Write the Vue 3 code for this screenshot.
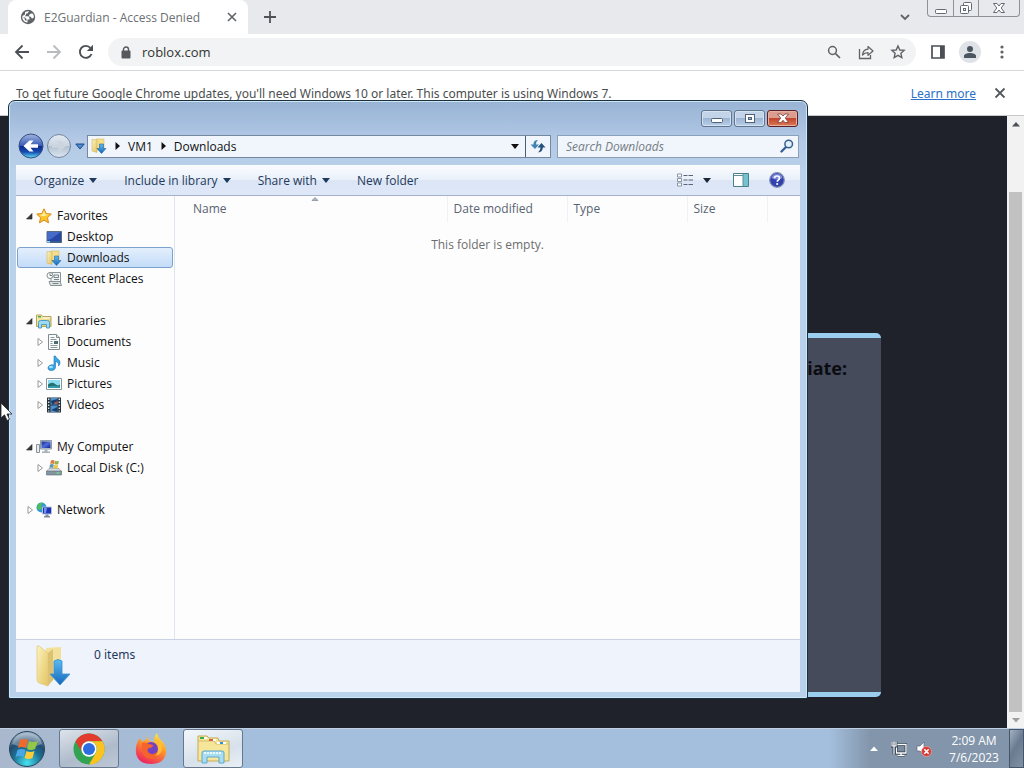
<template>
  <div class="desktop">
    <svg class="sprite" aria-hidden="true">
      <defs>
        <linearGradient id="folderFill" x1="0" y1="0" x2="1" y2="1">
          <stop offset="0" stop-color="#fdf3bd" />
          <stop offset="1" stop-color="#e2c462" />
        </linearGradient>
        <linearGradient id="blueArrow" x1="0" y1="0" x2="0" y2="1">
          <stop offset="0" stop-color="#5cbcf0" />
          <stop offset="1" stop-color="#1467bd" />
        </linearGradient>
        <linearGradient id="screenFill" x1="0" y1="0" x2="1" y2="1">
          <stop offset="0" stop-color="#16217e" />
          <stop offset="0.5" stop-color="#4d6ede" />
          <stop offset="1" stop-color="#101c86" />
        </linearGradient>
      </defs>
      <symbol id="icon-star" viewBox="0 0 16 16">
        <path
          d="M8 .8l2.2 4.7 5.1.6-3.8 3.5 1 5.2L8 12.2l-4.5 2.6 1-5.2L.7 6.1l5.1-.6z"
          fill="#fcc52c"
          stroke="#d88a1c"
        />
        <path d="M8 2.800l1.400 3.400 3.400.5-5.600 1.600-3.900-1.400 3.200-.6z" fill="#fff09a" />
      </symbol>
      <symbol id="icon-desktop" viewBox="0 0 16 16">
        <path d="M1 2.500h14.500v11H1z" fill="#2848a8" stroke="#5a6c86" />
        <path d="M1.500 3h13L5 10l-3.500 1z" fill="#5a86dc" opacity=".6" />
        <path d="M1 12h14.500v1.500H1z" fill="#365a8c" />
        <path d="M1 12h3v1.500H1z" fill="#8fe0f4" />
      </symbol>
      <symbol id="icon-downloads" viewBox="0 0 16 16">
        <path d="M5 1h8v11H5z" fill="#f5de8d" stroke="#dabd63" stroke-width=".6" />
        <path d="M1 1.500L6 2v12.500L1 13z" fill="url(#folderFill)" stroke="#cfab4b" stroke-width=".5" />
        <path
          d="M8.500 6h4v4.500H15l-4.500 5-4.500-5h2.500z"
          fill="url(#blueArrow)"
          stroke="#27639f"
          stroke-width=".6"
        />
      </symbol>
      <symbol id="icon-recent" viewBox="0 0 16 16">
        <path d="M5 1.500h9.500v11H5z" fill="#f1f4f5" stroke="#8d9799" />
        <path d="M3 10.500h11l1.500 4H4.500z" fill="#dfe5e5" stroke="#879193" />
        <path d="M8 4h4.500v2.500H8zM8 8.500h5M6.500 12.500h6" fill="none" stroke="#788588" />
        <circle cx="4" cy="4.500" r="3" fill="#fff" stroke="#7f8a8c" />
        <path d="M4 2.500v2h2" fill="none" stroke="#66777a" />
      </symbol>
      <symbol id="icon-libraries" viewBox="0 0 16 16">
        <path d="M.5 13.500V2h5l1 1.500H15v10z" fill="url(#folderFill)" stroke="#b5a45c" />
        <path d="M2 3h3v1.500H2z" fill="#45a758" />
        <path d="M7 4.500h7v1H7z" fill="#fff" />
        <path
          d="M2.500 15V9.500q0-2 2-2h7q2 0 2 2V15h-3v-3.500h-5V15z"
          fill="#9ddaf1"
          stroke="#4c9fc4"
        />
      </symbol>
      <symbol id="icon-documents" viewBox="0 0 16 16">
        <path d="M2.500.500h8l3 3v12h-11z" fill="#fbfcfc" stroke="#7e8b8f" />
        <path d="M10.500.500v3h3" fill="#d6dddf" stroke="#7e8b8f" />
        <path d="M4.500 3.500h4M4.500 5.500h6M4.500 7.500h2M4.500 9.500h2M4.500 11.500h7M4.500 13.500h7" stroke="#8d989b" />
        <path d="M8 7h4v3H8z" fill="#4c6974" />
      </symbol>
      <symbol id="icon-music" viewBox="0 0 16 16">
        <path
          d="M8 1h1.500c0 2.500 4.500 3 4.500 6.500 0 1.500-.6 2.600-1.500 3.500.3-2.500-.5-4-3-4.500V12c0 2-1.600 3.500-4 3.500S2 14.500 2 13c0-1.800 1.800-3.200 4-3.200.8 0 1.400.1 2 .4z"
          fill="#36a6e6"
          stroke="#1d72b6"
          stroke-width=".6"
        />
        <ellipse cx="5" cy="12" rx="2" ry="1.200" fill="#9fe0fa" />
      </symbol>
      <symbol id="icon-pictures" viewBox="0 0 16 16">
        <path d="M.5 2.500h15v11H.5z" fill="#fff" stroke="#8a979d" />
        <path d="M2 4h12v8H2z" fill="#8edbf1" />
        <path d="M2 8.500q4-3 7-.5t5 .5V12H2z" fill="#22706c" />
        <path d="M2 10.500q5-1.500 12 0V12H2z" fill="#3499ad" />
      </symbol>
      <symbol id="icon-videos" viewBox="0 0 16 16">
        <path d="M1 .5h14v15H1z" fill="#26323b" />
        <path d="M4.500 1h7v6.500h-7zM4.500 8.500h7V15h-7z" fill="#4e91cc" />
        <path d="M4.500 4l7-2v3l-5 2.500zM5 13l6.500-3v5z" fill="#1b3d6c" />
        <path d="M8 5.500l3.500-1.500v3.500z" fill="#b54936" />
        <path d="M2.700 1.500v13M13.300 1.500v13" stroke="#e9edf0" stroke-width="1.300" stroke-dasharray="1.500 1.500" />
      </symbol>
      <symbol id="icon-computer" viewBox="0 0 16 16">
        <path d="M.5 5.500h3v8h-3z" fill="#e9ecec" stroke="#8b9396" />
        <path d="M4.500 1.500h11v8.500h-11z" fill="#c8d2da" stroke="#8c99a5" />
        <path d="M5.500 2.500h9v6.500h-9z" fill="url(#screenFill)" />
        <path d="M8.500 10.500h3v2H14v1.500H6v-1.500h2.500z" fill="#a8b2b9" />
      </symbol>
      <symbol id="icon-disk" viewBox="0 0 16 16">
        <path d="M3 8.500h10l2.500 3H.5z" fill="#d8dee1" stroke="#808d93" stroke-width=".6" />
        <path d="M.5 11h15v4H.5z" fill="#8295a1" stroke="#5a6b76" stroke-width=".6" />
        <path d="M10.500 13h3" stroke="#7af175" />
        <path d="M5 .5q2-1 3.500 0L8 4Q6 3 4.200 4z" fill="#e0793f" />
        <path d="M9 .8q2 1 4 0L12.300 4q-2 1-4 0z" fill="#8fb04a" />
        <path d="M4 4.500q2-1 3.800 0L7.200 8q-2-1-3.800 0z" fill="#5d93b4" />
        <path d="M8.200 4.800q2 1 4 0L11.500 8q-2 1-4 0z" fill="#f0c53c" />
      </symbol>
      <symbol id="icon-network" viewBox="0 0 16 16">
        <circle cx="5.500" cy="5.500" r="5" fill="#2d98d8" />
        <path d="M2 2q3-2 5-1L5 4l1 3-3 1-2-2zM7 8l2-2 1 3-3 1z" fill="#52bd58" />
        <path d="M6.500 5h9v7h-9z" fill="#1c35b4" stroke="#b4c1d6" />
        <path d="M8 6h3l-1 5H8z" fill="#6f8ff0" />
        <path d="M9.500 12.500h3V14H14v1.500H8V14h1.500z" fill="#7f8c9d" />
      </symbol>
    </svg>

    <div class="browser">
      <header class="tab-strip">
        <div class="tab">
          <svg class="tab-icon" viewBox="0 0 16 16">
            <circle cx="8" cy="8" r="7.200" fill="#5f6368" />
            <path
              d="M9 2.300L7.500 4.500H6V6L4.500 7.300H8.500L9.500 9v1.500H7.500V13.500L6 13.300Q2.400 12 2.300 8.300L4.800 9.500V11L6.500 12V10L5 8.500H2.300L2.400 7 5 5.500V3.200Q7 2 9 2.300z"
              fill="#fff"
            />
            <path d="M11 4.500l2 .3q1 2 .8 4L12 9.500l-1.500-1.800-1.700-.5.7-1.700z" fill="#fff" />
          </svg>
          <span class="tab-title">E2Guardian - Access Denied</span>
          <button class="plain" aria-label="Close tab">
            <svg width="10" height="10" viewBox="0 0 10 10">
              <path d="M1 1l8 8M9 1L1 9" stroke="#5f6368" stroke-width="1.600" />
            </svg>
          </button>
        </div>
        <button class="plain new-tab" aria-label="New tab">
          <svg width="12" height="12" viewBox="0 0 12 12">
            <path d="M6 0v12M0 6h12" stroke="#4f5357" stroke-width="1.800" />
          </svg>
        </button>
        <button class="plain tab-search" aria-label="Search tabs">
          <svg width="10" height="7" viewBox="0 0 10 7">
            <path d="M1 1l4 4 4-4" fill="none" stroke="#5f6368" stroke-width="1.800" />
          </svg>
        </button>
        <div class="chrome-controls">
          <button class="plain" aria-label="Minimize browser">
            <svg width="12" height="14" viewBox="0 0 12 14">
              <rect x=".5" y="8.500" width="11" height="4" rx="1" fill="#fff" stroke="#626a73" />
            </svg>
          </button>
          <button class="plain" aria-label="Restore browser">
            <svg width="14" height="14" viewBox="0 0 14 14">
              <rect x="4.500" y="1.500" width="8" height="8" rx="1" fill="#fff" stroke="#626a73" />
              <rect x="1.500" y="4.500" width="8" height="8" rx="1" fill="#fff" stroke="#626a73" />
              <rect x="4.500" y="7.500" width="2" height="2" fill="none" stroke="#626a73" />
            </svg>
          </button>
          <button class="plain" aria-label="Close browser">
            <svg width="12" height="14" viewBox="0 0 12 14">
              <path
                d="M.5 2.500h3.500l2 2.500 2-2.500h3.500L8.200 7l3.300 4.500H8L6 9l-2 2.500H.5L3.800 7z"
                fill="#fff"
                stroke="#626a73"
              />
            </svg>
          </button>
        </div>
      </header>

      <nav class="toolbar">
        <button class="plain" aria-label="Back">
          <svg width="16" height="16" viewBox="0 0 16 16">
            <path d="M15 8H2M8.500 1.500L2 8l6.500 6.500" fill="none" stroke="#4c5054" stroke-width="1.800" />
          </svg>
        </button>
        <button class="plain" aria-label="Forward">
          <svg width="16" height="16" viewBox="0 0 16 16">
            <path d="M1 8h13M7.500 1.500L14 8l-6.500 6.500" fill="none" stroke="#b9bcbf" stroke-width="1.800" />
          </svg>
        </button>
        <button class="plain" aria-label="Reload">
          <svg width="16" height="16" viewBox="0 0 16 16">
            <path d="M13.500 10A6 6 0 1 1 12.500 4" fill="none" stroke="#4c5054" stroke-width="1.900" />
            <path d="M15 .8V7H8.800z" fill="#4c5054" />
          </svg>
        </button>
        <div class="omnibox">
          <svg width="10" height="13" viewBox="0 0 10 13">
            <path d="M2.500 5V3.500a2.500 2.500 0 0 1 5 0V5" fill="none" stroke="#55595e" stroke-width="1.400" />
            <rect y="4.500" x=".5" width="9" height="8" rx="1" fill="#55595e" />
          </svg>
          <input v-model="address" type="text" aria-label="Address" />
          <button class="plain" aria-label="Zoom">
            <svg width="16" height="16" viewBox="0 0 16 16">
              <circle cx="6.500" cy="6.500" r="3.900" fill="none" stroke="#5f6368" stroke-width="1.500" />
              <path d="M9.300 9.300L14 14" stroke="#5f6368" stroke-width="1.700" />
            </svg>
          </button>
          <button class="plain" aria-label="Share">
            <svg width="16" height="16" viewBox="0 0 16 16">
              <path d="M1.500 5v9.500h11V11" fill="none" stroke="#5f6368" stroke-width="1.300" />
              <path
                d="M4.500 11c.3-3.500 2.500-5.500 5.500-5.800V2.500L15 7l-5 4.300V8.600C7.500 8.600 6 9.300 4.500 11z"
                fill="none"
                stroke="#5f6368"
                stroke-width="1.200"
                stroke-linejoin="round"
              />
            </svg>
          </button>
          <button class="plain" aria-label="Bookmark">
            <svg width="16" height="16" viewBox="0 0 16 16">
              <path
                d="M8 2l1.800 4 4.300.4-3.200 2.900.9 4.300L8 11.400l-3.800 2.200.9-4.300L1.900 6.400 6.200 6z"
                fill="none"
                stroke="#5f6368"
                stroke-width="1.400"
              />
            </svg>
          </button>
        </div>
        <button class="plain" aria-label="Side panel">
          <svg width="16" height="16" viewBox="0 0 16 16">
            <path d="M2 2h12v12H2z" fill="none" stroke="#4c5054" stroke-width="1.700" />
            <path d="M10 2h4v12h-4z" fill="#4c5054" />
          </svg>
        </button>
        <button class="plain avatar" aria-label="Profile">
          <svg width="14" height="14" viewBox="0 0 14 14">
            <circle cx="7" cy="4" r="3" fill="#4c5661" />
            <path d="M1 13v-2c0-2 3-3 6-3s6 1 6 3v2z" fill="#4c5661" />
          </svg>
        </button>
        <button class="plain" aria-label="Menu">
          <svg width="16" height="16" viewBox="0 0 16 16">
            <g fill="#5f6368">
              <circle cx="8" cy="3" r="1.600" />
              <circle cx="8" cy="8" r="1.600" />
              <circle cx="8" cy="13" r="1.600" />
            </g>
          </svg>
        </button>
      </nav>

      <div class="infobar">
        <span>
          To get future Google Chrome updates, you'll need Windows 10 or later. This computer is
          using Windows 7.
        </span>
        <a href="#">Learn more</a>
        <button class="plain" aria-label="Dismiss">
          <svg width="12" height="12" viewBox="0 0 12 12">
            <path d="M1.500 1.500l9 9M10.500 1.500l-9 9" stroke="#55595d" stroke-width="1.800" />
          </svg>
        </button>
      </div>

      <div class="page">
        <main class="page-body">
          <section class="denied-card">
            <h1>iate:</h1>
          </section>
        </main>
        <div class="scrollbar">
          <svg width="16" height="16" viewBox="0 0 16 16"><path d="M4 10.500L8 6l4 4.500z" fill="#4d5156" /></svg>
          <div class="thumb"></div>
          <svg width="16" height="16" viewBox="0 0 16 16"><path d="M4 6l4 4.500L12 6z" fill="#9da0a2" /></svg>
        </div>
      </div>
    </div>

    <!-- Explorer window -->
    <section class="explorer">
      <div class="window-controls">
        <button aria-label="Minimize">
          <svg width="12" height="11" viewBox="0 0 12 11">
            <rect x=".5" y="5.500" width="11" height="4" rx="1" fill="#fff" stroke="#4f6077" />
          </svg>
        </button>
        <button aria-label="Maximize">
          <svg width="12" height="11" viewBox="0 0 12 11">
            <rect x="1.500" y="1.500" width="9" height="8" fill="#fff" stroke="#4f6077" />
            <rect x="4.500" y="4.500" width="3" height="2" fill="#9fb7d3" stroke="#4f6077" />
          </svg>
        </button>
        <button class="close" aria-label="Close">
          <svg width="12" height="11" viewBox="0 0 12 11">
            <path
              d="M.5 1h3.500l2 2 2-2h3.500L8.300 5l3.200 4.500H8l-2-2.200-2 2.200H.5L3.700 5z"
              fill="#fff"
              stroke="#7c3d3b"
              stroke-width=".8"
            />
          </svg>
        </button>
      </div>

      <div class="nav-row">
        <button class="plain" aria-label="Back">
          <svg width="26" height="26" viewBox="0 0 26 26">
            <defs>
              <linearGradient id="backFill" x1="0" y1="0" x2="0" y2="1">
                <stop offset="0" stop-color="#9fb6e0" />
                <stop offset="0.480" stop-color="#3c5cb8" />
                <stop offset="0.500" stop-color="#0c2a8a" />
                <stop offset="0.750" stop-color="#174bb0" />
                <stop offset="1" stop-color="#63e2fb" />
              </linearGradient>
            </defs>
            <circle cx="13" cy="13" r="12" fill="url(#backFill)" stroke="#35507e" />
            <path d="M20 11.300h-7.500l3-3.800h-4L5.500 13l6 5.500h4l-3-3.800H20z" fill="#fff" />
          </svg>
        </button>
        <button class="plain" aria-label="Forward">
          <svg width="26" height="26" viewBox="0 0 26 26">
            <defs>
              <linearGradient id="forwardFill" x1="0" y1="0" x2="0" y2="1">
                <stop offset="0" stop-color="#e3eaf2" />
                <stop offset="0.480" stop-color="#cad5e1" />
                <stop offset="0.520" stop-color="#b3c1d0" />
                <stop offset="1" stop-color="#dbe8f3" />
              </linearGradient>
            </defs>
            <circle cx="13" cy="13" r="11.500" fill="url(#forwardFill)" stroke="#73859c" />
            <path d="M6 11.300h7.500l-3-3.300h4l5.500 5-5.500 5h-4l3-3.300H6z" fill="#cbd5df" />
          </svg>
        </button>
        <button class="plain history" aria-label="Recent locations">
          <svg width="10" height="7" viewBox="0 0 10 7">
            <path d="M.8 1h8.400L5 6z" fill="#4a8bd4" stroke="#1d4883" />
          </svg>
        </button>
        <div class="address">
          <svg width="16" height="16"><use href="#icon-downloads" /></svg>
          <template v-for="crumb in crumbs" :key="crumb">
            <svg width="5" height="8" viewBox="0 0 5 8"><path d="M.5 0L5 4 .5 8z" fill="#111" /></svg>
            <button class="plain">{{ crumb }}</button>
          </template>
          <button class="plain address-drop" aria-label="Previous locations">
            <svg width="8" height="5" viewBox="0 0 8 5"><path d="M0 0h8L4 5z" fill="#111" /></svg>
          </button>
          <button class="plain refresh" aria-label="Refresh">
            <svg width="16" height="14" viewBox="0 0 16 14">
              <path d="M8 1Q3.500 1 3.500 5v.5H.5L5 10l4-4.500H6Q5.500 3 8 1z" fill="#3f86b5" />
              <path d="M8 13.500q4.500-.5 4.800-4.500V8.500H15.500L11.500 4 7.500 8.500h3q0 3-2.500 5z" fill="#26507f" />
            </svg>
          </button>
        </div>
        <label class="search">
          <input v-model="query" type="text" placeholder="Search Downloads" aria-label="Search" />
          <svg width="14" height="14" viewBox="0 0 14 14">
            <path d="M1.500 12.500L6 8" stroke="#37619a" stroke-width="2.400" stroke-linecap="round" />
            <circle cx="8.700" cy="5" r="3.800" fill="#e1f1fb" stroke="#37618d" stroke-width="1.500" />
          </svg>
        </label>
      </div>

      <div class="client">
        <div class="command-bar">
          <button v-for="command in commands" :key="command.label" class="plain command">
            {{ command.label }}
            <svg v-if="command.menu" width="8" height="5" viewBox="0 0 8 5">
              <path d="M0 0h8L4 5z" fill="#1e395b" />
            </svg>
          </button>
          <div class="view-tools">
            <button class="plain" aria-label="Change view">
              <svg width="16" height="14" viewBox="0 0 16 14">
                <path
                  d="M.5 1h4v3h-4zM.5 5.500h4v3h-4zM.5 10h4v3h-4z"
                  fill="#fff"
                  stroke="#717e90"
                  stroke-width=".8"
                />
                <path d="M6.500 2.500h4M11.500 2.500H16M6.500 7h4M11.500 7H16M6.500 11.500h4M11.500 11.500H16" stroke="#55647a" />
              </svg>
            </button>
            <button class="plain view-menu" aria-label="More view options">
              <svg width="8" height="5" viewBox="0 0 8 5"><path d="M0 0h8L4 5z" fill="#1a2636" /></svg>
            </button>
            <button class="plain preview" aria-label="Preview pane">
              <svg width="16" height="14" viewBox="0 0 16 14">
                <path d="M.5.500h15v13H.5z" fill="#fff" stroke="#4a7f8b" />
                <path d="M10 1h5v12h-5z" fill="#72c3cf" />
                <path d="M1 2.500h9M10 1v12" stroke="#5e909b" />
              </svg>
            </button>
            <button class="plain" aria-label="Help">
              <svg width="16" height="16" viewBox="0 0 16 16">
                <circle cx="8" cy="8" r="7.300" fill="#3040ad" stroke="#8590b5" stroke-width="1.200" />
                <path d="M2.500 6Q3 2 8 2t5.500 4Q8 9 2.500 6z" fill="#7b8ae0" />
                <path
                  d="M5.500 6.300Q5.500 4 8 4t2.500 2.200c0 1.600-2.300 1.800-2.300 3.600"
                  fill="none"
                  stroke="#fff"
                  stroke-width="1.700"
                />
                <circle cx="8.200" cy="12" r="1.100" fill="#fff" />
              </svg>
            </button>
          </div>
        </div>

        <div class="panes">
          <nav class="tree">
            <ul v-for="group in tree" :key="group.label" class="tree-group">
              <li>
                <button class="plain row">
                  <svg width="8" height="8" viewBox="0 0 8 8">
                    <path v-if="group.items.length" d="M6 1.500V7H.5z" fill="#3a3a3a" stroke="#222" stroke-width=".6" />
                    <path v-else d="M2 .5v7L6.500 4z" fill="#fff" stroke="#999" />
                  </svg>
                  <svg class="row-icon" width="16" height="16"><use :href="'#icon-' + group.icon" /></svg>
                  {{ group.label }}
                </button>
              </li>
              <li v-for="item in group.items" :key="item.label">
                <button
                  class="plain row child"
                  :class="{ selected: item.label === selected }"
                  @click="selected = item.label"
                >
                  <svg width="8" height="8" viewBox="0 0 8 8">
                    <path v-if="item.expandable" d="M2 .5v7L6.500 4z" fill="#fff" stroke="#999" />
                  </svg>
                  <svg class="row-icon" width="16" height="16"><use :href="'#icon-' + item.icon" /></svg>
                  {{ item.label }}
                </button>
              </li>
            </ul>
          </nav>

          <div class="files">
            <table>
              <thead>
                <tr>
                  <th class="col-name">
                    Name
                    <svg class="sort-arrow" width="8" height="4" viewBox="0 0 8 4">
                      <path d="M1 3.500L4 .5l3 3z" fill="#aab6c4" stroke="#6d7a8a" stroke-width=".6" />
                    </svg>
                  </th>
                  <th class="col-wide">Date modified</th>
                  <th class="col-wide">Type</th>
                  <th class="col-size">Size</th>
                  <td></td>
                </tr>
              </thead>
              <tbody>
                <tr>
                  <td colspan="5" class="empty">This folder is empty.</td>
                </tr>
              </tbody>
            </table>
          </div>
        </div>

        <footer class="details">
          <svg width="40" height="44" viewBox="0 0 40 44">
            <path d="M12 4l15-1v31l-15 4z" fill="#f3e09a" />
            <path d="M3 3q0-2 2-1l9 7v33L5 39q-2-1-2-3z" fill="url(#folderFill)" stroke="#e1cb82" stroke-width=".8" />
            <path d="M14 9l5-4v31l-5 6z" fill="#dcc170" />
            <path
              d="M20 17q4-3 8 0v13h8L26 41 16 30h4z"
              fill="url(#blueArrow)"
              stroke="#3a8fcf"
              stroke-width=".8"
            />
          </svg>
          <span>0 items</span>
        </footer>
      </div>
    </section>

    <footer class="taskbar">
      <button class="plain start" aria-label="Start">
        <svg width="38" height="38" viewBox="0 0 38 38">
          <defs>
            <radialGradient id="orb" cx=".5" cy=".9" r=".9">
              <stop offset="0" stop-color="#46e3ef" />
              <stop offset="0.450" stop-color="#1c7094" />
              <stop offset="0.700" stop-color="#234c70" />
              <stop offset="1" stop-color="#a9bdd0" />
            </radialGradient>
          </defs>
          <circle cx="19" cy="19" r="17.500" fill="url(#orb)" stroke="#29445c" />
          <path d="M4 14Q7 3 19 3t15 11q-15 7-30 0z" fill="#fff" opacity=".3" />
          <path d="M12 10q4-2 8 0l-2 8q-4-2-8 0z" fill="#ee6a2c" />
          <path d="M21 11q4 2 9 0l-3 8q-4 2-8 0z" fill="#94c743" />
          <path d="M9.500 20q4-2 8 0l-2 7q-4-2-8 0z" fill="#4aa6e5" />
          <path d="M18.500 21q4 2 8 0l-2 7q-4 2-8 0z" fill="#fbcb3a" />
        </svg>
      </button>
      <button class="plain task running" aria-label="Google Chrome">
        <svg width="32" height="32" viewBox="0 0 32 32">
          <circle cx="16" cy="16" r="15.500" fill="#32a350" />
          <path d="M2.600 8.200A15.500 15.500 0 0 1 29.400 8.200H16a7.800 7.800 0 0 0-6.800 11.700z" fill="#e33b2e" />
          <path d="M29.400 8.200A15.500 15.500 0 0 1 16 31.500l6.800-11.600A7.800 7.800 0 0 0 16 8.200z" fill="#fcc31e" />
          <circle cx="16" cy="16" r="7.700" fill="#fff" />
          <circle cx="16" cy="16" r="6" fill="#2d6de0" />
        </svg>
      </button>
      <button class="plain task" aria-label="Firefox">
        <svg width="32" height="32" viewBox="0 0 32 32">
          <defs>
            <linearGradient id="fox" x1=".8" y1="0" x2=".3" y2="1">
              <stop offset="0" stop-color="#ffee45" />
              <stop offset="0.450" stop-color="#ff9329" />
              <stop offset="1" stop-color="#ed1f62" />
            </linearGradient>
          </defs>
          <path
            d="M5 5l2 4q2-2 4-2l2-4 1 5 5 1q0-6 3-9 1 5 5 8 5 6 4 12-2 11-15 11T1 20Q0 11 5 5z"
            fill="url(#fox)"
          />
          <circle cx="16" cy="16" r="7" fill="#7442c4" />
          <path d="M7 10q4-1 7 1l4 1q0 3-4 3-3 2 0 5 5 3 9-2 1 7-6 8-9 0-10-9z" fill="#f4642c" />
          <path d="M18 8q6 2 5 10-1 4-3 5 8-2 7-10-2-4-5-7z" fill="#ffbe35" />
        </svg>
      </button>
      <button class="plain task active" aria-label="Windows Explorer">
        <svg width="34" height="32" viewBox="0 0 34 32">
          <path d="M2 28V3h9l2 2h9l1 3h10v20z" fill="#f6e69a" stroke="#c4ab55" />
          <path d="M2 8h16l2 3h13" fill="none" stroke="#d1bc68" />
          <path d="M4 4h6v2H4z" fill="#3cac48" />
          <path d="M13 6h7v2h-7z" fill="#d8653a" />
          <path d="M21 9h9v2h-9zM8 4h3v2H8zM17 6h3v2h-3z" fill="#fff" />
          <path d="M24 9h3v2h-3z" fill="#2f8ed4" />
          <path
            d="M6 30V20q0-2 2-2h18q2 0 2 2v10h-5v-6H11v6z"
            fill="#a8ddf3"
            stroke="#5fa9cb"
          />
          <path d="M8 20h18" stroke="#e8f8fe" stroke-width="2" stroke-dasharray="2 1" />
        </svg>
      </button>
      <div class="tray">
        <button class="plain" aria-label="Show hidden icons">
          <svg width="8" height="5" viewBox="0 0 8 5"><path d="M0 5l4-4.500L8 5z" fill="#fff" /></svg>
        </button>
        <button class="plain" aria-label="Network status">
          <svg width="16" height="16" viewBox="0 0 16 16">
            <path d="M5.500 3.500h9.500v8.500H5.500zM10 12v2.500M6.500 14.500h7" fill="#7c8c9f" stroke="#2b3a4b" stroke-width="2.800" />
            <path d="M5.500 3.500h9.500v8.500H5.500zM10 12v2.500M6.500 14.500h7" fill="none" stroke="#fff" stroke-width="1.300" />
            <path d="M1 .5v4.500h4V.5M3 5v8.500" fill="none" stroke="#2b3a4b" stroke-width="2.800" />
            <path d="M1 .5v4.500h4V.5M3 .5v13" fill="none" stroke="#fff" stroke-width="1.200" />
          </svg>
        </button>
        <button class="plain" aria-label="Volume">
          <svg width="16" height="16" viewBox="0 0 16 16">
            <path d="M1 5h3l4-4v13l-4-4H1z" fill="#fff" stroke="#4e5d6e" stroke-width=".6" />
            <circle cx="10.500" cy="10.500" r="5" fill="#d83a36" stroke="#f3b5b0" stroke-width=".6" />
            <path d="M8.300 8.300l4.400 4.400M12.700 8.300l-4.400 4.400" stroke="#fff" stroke-width="1.600" />
          </svg>
        </button>
        <button class="plain clock">
          <span>2:09 AM</span>
          <span>7/6/2023</span>
        </button>
        <button class="plain show-desktop" aria-label="Show desktop"></button>
      </div>
    </footer>

    <svg class="cursor" width="13" height="20" viewBox="0 0 13 20">
      <path d="M1 1v15l3.500-3.200L7 18.500l2.500-1.200-2.500-5.300H12z" fill="#fff" stroke="#222" stroke-width=".8" />
    </svg>
  </div>
</template>

<script setup>
import { ref } from "vue";

const address = ref("roblox.com");
const query = ref("");
const selected = ref("Downloads");

const crumbs = ["VM1", "Downloads"];

const commands = [
  { label: "Organize", menu: true },
  { label: "Include in library", menu: true },
  { label: "Share with", menu: true },
  { label: "New folder", menu: false },
];

// Navigation pane
const tree = [
  {
    label: "Favorites",
    icon: "star",
    items: [
      { label: "Desktop", icon: "desktop" },
      { label: "Downloads", icon: "downloads" },
      { label: "Recent Places", icon: "recent" },
    ],
  },
  {
    label: "Libraries",
    icon: "libraries",
    items: [
      { label: "Documents", icon: "documents", expandable: true },
      { label: "Music", icon: "music", expandable: true },
      { label: "Pictures", icon: "pictures", expandable: true },
      { label: "Videos", icon: "videos", expandable: true },
    ],
  },
  {
    label: "My Computer",
    icon: "computer",
    items: [{ label: "Local Disk (C:)", icon: "disk", expandable: true }],
  },
  { label: "Network", icon: "network", items: [] },
];
</script>

<style>
body {
  margin: 0;
}
</style>

<style scoped>
.desktop {
  position: relative;
  display: flex;
  flex-direction: column;
  min-height: 100vh;
  overflow: hidden;
  font-family: "Open Sans", "Noto Sans", sans-serif;
  font-size: 12px;
  color: #111;
}

.desktop * {
  box-sizing: border-box;
}

.sprite {
  position: absolute;
  width: 0;
  height: 0;
}

svg {
  display: block;
  flex-shrink: 0;
}

button,
input {
  font: inherit;
  color: inherit;
}

input {
  min-width: 0;
  padding: 0;
  border: 0;
  background: none;
  outline: none;
}

.plain {
  display: flex;
  align-items: center;
  justify-content: center;
  padding: 0;
  border: 0;
  background: none;
}

/* Browser */
.browser {
  flex: 1;
  display: flex;
  flex-direction: column;
}

.tab-strip {
  display: flex;
  align-items: center;
  height: 34px;
  padding-left: 8px;
  background: #e7e9ec;
}

.tab {
  display: flex;
  align-items: center;
  width: 240px;
  height: 34px;
  padding: 0 11px 0 12px;
  border-radius: 8px 8px 0 0;
  background: #fff;
  color: #6b6f73;
}

.tab-icon {
  width: 16px;
  height: 16px;
  margin-right: 8px;
}

.tab-title {
  flex: 1;
}

.new-tab {
  margin-left: 16px;
}

.tab-search {
  margin-left: auto;
}

.chrome-controls {
  display: flex;
  align-self: flex-start;
  height: 17px;
  margin: 0 4px 0 17px;
  border: 1px solid #8d9299;
  border-top: 0;
  border-radius: 0 0 4px 4px;
}

.chrome-controls button {
  width: 25px;
}

.chrome-controls button + button {
  border-left: 1px solid #8d9299;
}

.chrome-controls button:last-child {
  width: 41px;
}

.toolbar {
  display: flex;
  align-items: center;
  gap: 16px;
  height: 37px;
  padding: 0 14px;
  border-bottom: 1px solid #d6d8da;
  background: #fff;
}

.omnibox {
  flex: 1;
  display: flex;
  align-items: center;
  gap: 16px;
  height: 28px;
  margin: 0 -2px;
  padding: 0 10px 0 13px;
  border-radius: 14px;
  background: #f1f3f4;
}

.omnibox > svg {
  margin-right: -5px;
}

.omnibox input {
  flex: 1;
  font-size: 13px;
  color: #333;
}

.avatar {
  width: 22px;
  height: 22px;
  margin: 0 -3px;
  border-radius: 50%;
  background: #dfe2e7;
}

.infobar {
  display: flex;
  align-items: center;
  height: 45px;
  padding: 0 18px 0 16px;
  border-bottom: 1px solid #c5c7c9;
  background: #fff;
  font-family: "Noto Sans", sans-serif;
  color: #4a4d50;
}

.infobar span {
  flex: 1;
}

.infobar a {
  margin-right: 18px;
  color: #2b70c9;
}

.page {
  flex: 1;
  display: flex;
  min-height: 612px;
  background: #1f222b;
}

.page-body {
  flex: 1;
  padding-top: 217px;
}

.denied-card {
  width: 75%;
  height: 364px;
  margin: 0 auto;
  padding: 18px 34px;
  border-top: 5px solid #9bcdef;
  border-bottom: 5px solid #9bcdef;
  border-radius: 0 5px 5px 0;
  background: #464b5c;
  text-align: right;
}

.denied-card h1 {
  margin: 0;
  font-family: "Noto Sans", sans-serif;
  font-size: 18px;
  line-height: 24px;
  color: #0b0c12;
}

.scrollbar {
  display: flex;
  flex-direction: column;
  align-items: center;
  width: 17px;
  background: #f2f2f2;
}

.thumb {
  flex: 1;
  width: 13px;
  margin-top: 60px;
  background: #c1c1c1;
}

/* Explorer window */
.explorer {
  position: absolute;
  inset: 100px 216px 69px 8px;
  display: flex;
  flex-direction: column;
  padding: 8px 7px 6px;
  border: 1px solid #17303f;
  border-radius: 7px 7px 2px 2px;
  background: linear-gradient(#98b3d5, #b3c9e6 40px, #b9d1ea 70px, #b9d1ea);
  box-shadow: inset 0 0 0 1px #cfe7f5;
}

.window-controls {
  display: flex;
  justify-content: flex-end;
  gap: 2px;
  padding: 1px 2px 0;
}

.window-controls button {
  display: flex;
  align-items: center;
  justify-content: center;
  width: 31px;
  height: 17px;
  padding: 0;
  border: 1px solid #60758f;
  border-radius: 3px;
  background: linear-gradient(#c3d4e9 45%, #9cb5d3 50%, #b9cfe8);
  box-shadow: inset 0 0 0 1px #d5e3f1;
}

.window-controls .close {
  border-color: #5a2127;
  background: linear-gradient(#dc9d8e 45%, #c0452f 50%, #dc7a52);
  box-shadow: inset 0 0 0 1px #e6b1a3;
}

.nav-row {
  display: flex;
  align-items: center;
  gap: 2px;
  height: 38px;
  padding: 0 1px 0 2px;
}

.history {
  width: 11px;
}

.address {
  flex: 1;
  display: flex;
  align-items: center;
  gap: 8px;
  height: 23px;
  padding-left: 3px;
  border: 1px solid #7688a0;
  background: #f0f6fc;
}

.address-drop {
  width: 20px;
  height: 21px;
  margin-left: auto;
}

.refresh {
  width: 25px;
  height: 21px;
  margin-left: -8px;
  border-left: 1px solid #4a5e78;
}

.search {
  display: flex;
  align-items: center;
  width: 242px;
  height: 23px;
  margin-left: 4px;
  padding: 0 4px 0 8px;
  border: 1px solid #8ca0ba;
  background: #f0f6fc;
}

.search input {
  flex: 1;
}

.search input::placeholder {
  font-style: italic;
  color: #757c84;
  opacity: 1;
}

.client {
  flex: 1;
  display: flex;
  flex-direction: column;
  background: #fdfdfe;
}

.command-bar {
  display: flex;
  align-items: center;
  gap: 27px;
  height: 31px;
  padding: 0 15px 0 18px;
  border-bottom: 1px solid #a3b2c8;
  background: linear-gradient(#fbfcfe, #e9f0fa 50%, #dce5f5 52%, #dfe8f8);
  color: #1e395b;
}

.command {
  gap: 5px;
}

.view-tools {
  display: flex;
  align-items: center;
  margin-left: auto;
}

.view-menu {
  margin: 0 22px 0 10px;
}

.preview {
  margin-right: 20px;
}

.panes {
  flex: 1;
  display: flex;
}

.tree {
  width: 159px;
  padding: 9px 1px 0;
  border-right: 1px solid #dfe5ee;
}

.tree-group {
  margin: 0 0 21px;
  padding: 0;
  list-style: none;
}

.row {
  justify-content: flex-start;
  width: 100%;
  height: 21px;
  padding-left: 8px;
  border: 1px solid transparent;
  border-radius: 3px;
}

.row-icon {
  margin: 0 5px 0 2px;
}

.child {
  padding-left: 18px;
}

.selected {
  border-color: #7da2ce;
  background: linear-gradient(#e4effc, #c3dcf8);
}

.files {
  flex: 1;
}

table {
  width: 100%;
  table-layout: fixed;
  border-collapse: collapse;
}

th {
  position: relative;
  height: 26px;
  padding: 0 0 2px 6px;
  border-right: 1px solid #eef1f5;
  font-weight: 400;
  text-align: left;
  color: #596470;
}

.col-name {
  width: 272px;
  padding-left: 18px;
}

.col-wide {
  width: 120px;
}

.col-size {
  width: 80px;
}

.sort-arrow {
  position: absolute;
  top: 1px;
  left: 50%;
}

.empty {
  height: 44px;
  padding: 0;
  text-align: center;
  color: #6d6d6d;
}

.details {
  display: flex;
  height: 53px;
  padding: 4px 18px;
  border-top: 1px solid #c9d3e4;
  background: #eff3fc;
  color: #1e395b;
}

.details span {
  margin: 2px 0 0 20px;
  font-family: "Noto Sans", sans-serif;
}

/* Taskbar */
.taskbar {
  display: flex;
  align-items: center;
  height: 40px;
  padding-left: 8px;
  border-top: 1px solid #c0d0e2;
  background: linear-gradient(90deg, #a9b8cd, #a4bfdd 25%, #a4bfdd 81%, #8295ab 85%, #8295ab);
}

.start {
  margin-right: 13px;
}

.task {
  width: 60px;
  height: 39px;
  margin-right: 2px;
}

.running {
  border: 1px solid #67788f;
  border-radius: 3px;
  background: linear-gradient(160deg, #dde3ea, #aebbcb 60%, #bdc8d6);
}

.active {
  border: 1px solid #68788c;
  border-radius: 3px;
  background: linear-gradient(160deg, #f3f7fa, #d7e1eb 60%, #e9eff5);
}

.tray {
  display: flex;
  align-items: center;
  gap: 9px;
  height: 100%;
  margin-left: auto;
  color: #fff;
}

.clock {
  flex-direction: column;
  width: 66px;
  line-height: 17px;
}

.tray button:first-child {
  margin-right: 4px;
}

.show-desktop {
  width: 15px;
  height: 100%;
  margin-left: -7px;
  border: 1px solid #46566a;
  background: linear-gradient(120deg, #a3b1c1, #6a7b91 45%, #8191a5);
}

.cursor {
  position: absolute;
  top: 402px;
  left: 0;
}
</style>
